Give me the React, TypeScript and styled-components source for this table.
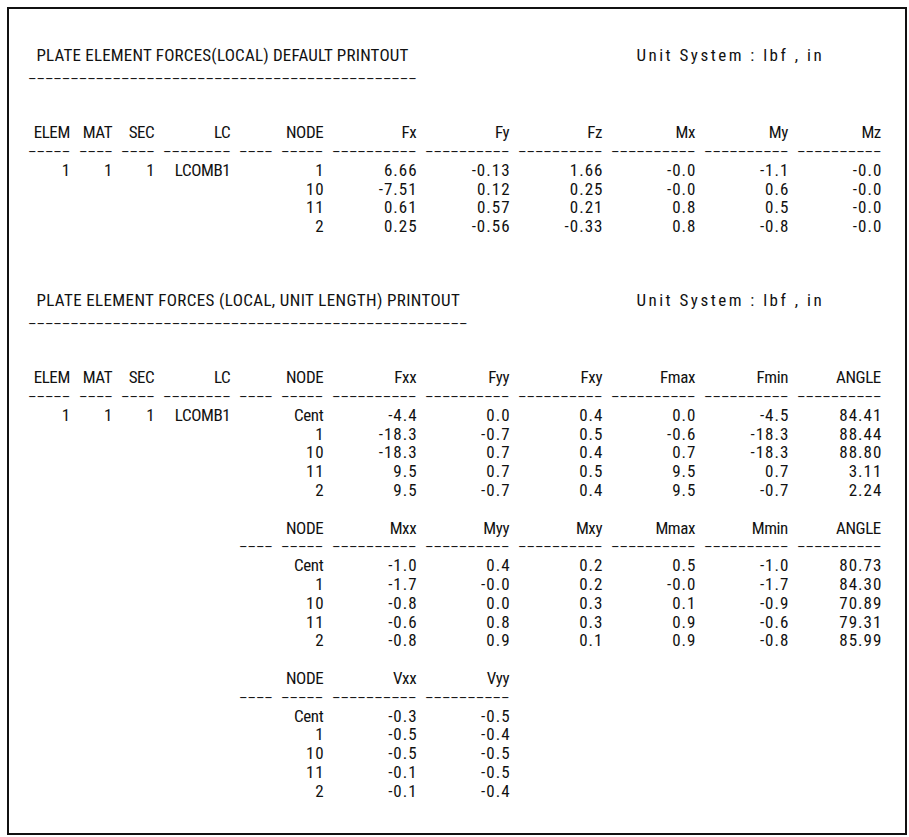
import styled, { createGlobalStyle } from 'styled-components';

// one character cell of the original fixed-pitch printout
const CH = 8.45;
const LINE = 18.8;
const COLS = [5, 4, 4, 8, 4, 5, 10, 10, 10, 10, 10, 10];
// hyphens are set small and stretched to the cell pitch
const DASH_FONT = 12;
const DASH_STRETCH = CH / (DASH_FONT * 0.333);

type Block = {
  head: string[];
  dashFrom: number;
  dashTo: number;
  rows: string[][];
};

const pad = (cells: string[]) => [...cells, ...Array(COLS.length - cells.length).fill('')];
const isNumber = (v: string) => /^-?[\d.]+$/.test(v);

const GlobalStyle = createGlobalStyle`
  html, body {
    margin: 0;
    padding: 0;
    background: #ffffff;
  }
`;

const Page = styled.div`
  padding: 7px 0 0 7px;
`;

const Sheet = styled.div`
  width: 900px;
  height: 828px;
  box-sizing: border-box;
  border: 2px solid #111;
  padding: 37px 0 0 19px;
  color: #111;
  font-family: "Liberation Sans Narrow", "Roboto Condensed", "DejaVu Sans Condensed", "Liberation Sans", sans-serif;
  font-size: 17px;
  line-height: ${LINE}px;
  white-space: pre;
`;

const Section = styled.section<{ $gap: number }>`
  margin-top: ${(p) => p.$gap}px;
`;

const TitleRow = styled.div`
  display: flex;
  margin-bottom: 4px;
`;

const Title = styled.div<{ $spacing: number }>`
  width: ${72 * CH}px;
  padding-left: ${CH}px;
  box-sizing: border-box;
  letter-spacing: ${(p) => p.$spacing}px;
`;

const Unit = styled.div`
  letter-spacing: 2.5px;
`;

const Dashes = styled.div`
  font-family: "Liberation Sans", Arial, sans-serif;
  font-size: ${DASH_FONT}px;
  line-height: ${LINE}px;
  height: ${LINE}px;
`;

const DashRun = styled.span`
  display: inline-block;
  transform: scaleX(${DASH_STRETCH});
  transform-origin: 0 50%;
`;

const Rule = styled(Dashes)`
  margin-bottom: ${LINE * 2 - 2}px;
`;

const Table = styled.div<{ $gap: number }>`
  display: grid;
  grid-template-columns: ${COLS.map((w) => `${w * CH}px`).join(' ')};
  column-gap: ${CH}px;
  margin-top: ${(p) => p.$gap}px;
`;

const Cell = styled.div<{ $num: boolean }>`
  text-align: right;
  min-height: ${LINE}px;
  letter-spacing: ${(p) => (p.$num ? 1 : -0.4)}px;
  margin-right: ${(p) => (p.$num ? -1 : 0.4)}px;
`;

const DashCell = styled(Dashes)``;

const firstTable: Block = {
  head: ['ELEM', 'MAT', 'SEC', 'LC', '', 'NODE', 'Fx', 'Fy', 'Fz', 'Mx', 'My', 'Mz'],
  dashFrom: 0,
  dashTo: 12,
  rows: [
    ['1', '1', '1', 'LCOMB1', '', '1', '6.66', '-0.13', '1.66', '-0.0', '-1.1', '-0.0'],
    ['', '', '', '', '', '10', '-7.51', '0.12', '0.25', '-0.0', '0.6', '-0.0'],
    ['', '', '', '', '', '11', '0.61', '0.57', '0.21', '0.8', '0.5', '-0.0'],
    ['', '', '', '', '', '2', '0.25', '-0.56', '-0.33', '0.8', '-0.8', '-0.0'],
  ],
};

const unitTables: Block[] = [
  {
    head: ['ELEM', 'MAT', 'SEC', 'LC', '', 'NODE', 'Fxx', 'Fyy', 'Fxy', 'Fmax', 'Fmin', 'ANGLE'],
    dashFrom: 0,
    dashTo: 12,
    rows: [
      ['1', '1', '1', 'LCOMB1', '', 'Cent', '-4.4', '0.0', '0.4', '0.0', '-4.5', '84.41'],
      ['', '', '', '', '', '1', '-18.3', '-0.7', '0.5', '-0.6', '-18.3', '88.44'],
      ['', '', '', '', '', '10', '-18.3', '0.7', '0.4', '0.7', '-18.3', '88.80'],
      ['', '', '', '', '', '11', '9.5', '0.7', '0.5', '9.5', '0.7', '3.11'],
      ['', '', '', '', '', '2', '9.5', '-0.7', '0.4', '9.5', '-0.7', '2.24'],
    ],
  },
  {
    head: ['', '', '', '', '', 'NODE', 'Mxx', 'Myy', 'Mxy', 'Mmax', 'Mmin', 'ANGLE'],
    dashFrom: 4,
    dashTo: 12,
    rows: [
      ['', '', '', '', '', 'Cent', '-1.0', '0.4', '0.2', '0.5', '-1.0', '80.73'],
      ['', '', '', '', '', '1', '-1.7', '-0.0', '0.2', '-0.0', '-1.7', '84.30'],
      ['', '', '', '', '', '10', '-0.8', '0.0', '0.3', '0.1', '-0.9', '70.89'],
      ['', '', '', '', '', '11', '-0.6', '0.8', '0.3', '0.9', '-0.6', '79.31'],
      ['', '', '', '', '', '2', '-0.8', '0.9', '0.1', '0.9', '-0.8', '85.99'],
    ],
  },
  {
    head: ['', '', '', '', '', 'NODE', 'Vxx', 'Vyy'],
    dashFrom: 4,
    dashTo: 8,
    rows: [
      ['', '', '', '', '', 'Cent', '-0.3', '-0.5'],
      ['', '', '', '', '', '1', '-0.5', '-0.4'],
      ['', '', '', '', '', '10', '-0.5', '-0.5'],
      ['', '', '', '', '', '11', '-0.1', '-0.5'],
      ['', '', '', '', '', '2', '-0.1', '-0.4'],
    ],
  },
];

const ForceTable = ({ block, gap }: { block: Block; gap: number }) => (
  <Table $gap={gap}>
    {pad(block.head).map((h, i) => (
      <Cell key={`h${i}`} $num={false}>{h}</Cell>
    ))}
    {COLS.map((w, i) => (
      <DashCell key={`d${i}`}>
        {i >= block.dashFrom && i < block.dashTo && <DashRun>{'-'.repeat(w)}</DashRun>}
      </DashCell>
    ))}
    {block.rows.map((row, r) =>
      pad(row).map((v, i) => (
        <Cell key={`r${r}-${i}`} $num={isNumber(v)}>{v}</Cell>
      ))
    )}
  </Table>
);

const Heading = ({ title, spacing }: { title: string; spacing: number }) => (
  <>
    <TitleRow>
      <Title $spacing={spacing}>{title}</Title>
      <Unit>Unit System : lbf , in</Unit>
    </TitleRow>
    <Rule>
      <DashRun>{'-'.repeat(title.length + 2)}</DashRun>
    </Rule>
  </>
);

export default function App() {
  return (
    <>
      <GlobalStyle />
      <Page>
        <Sheet>
          <Section $gap={0}>
            <Heading title="PLATE ELEMENT FORCES(LOCAL) DEFAULT PRINTOUT" spacing={0.2} />
            <ForceTable block={firstTable} gap={0} />
          </Section>
          <Section $gap={55}>
            <Heading title="PLATE ELEMENT FORCES (LOCAL, UNIT LENGTH) PRINTOUT" spacing={0.37} />
            {unitTables.map((b, i) => (
              <ForceTable key={i} block={b} gap={i === 0 ? 0 : LINE} />
            ))}
          </Section>
        </Sheet>
      </Page>
    </>
  );
}
